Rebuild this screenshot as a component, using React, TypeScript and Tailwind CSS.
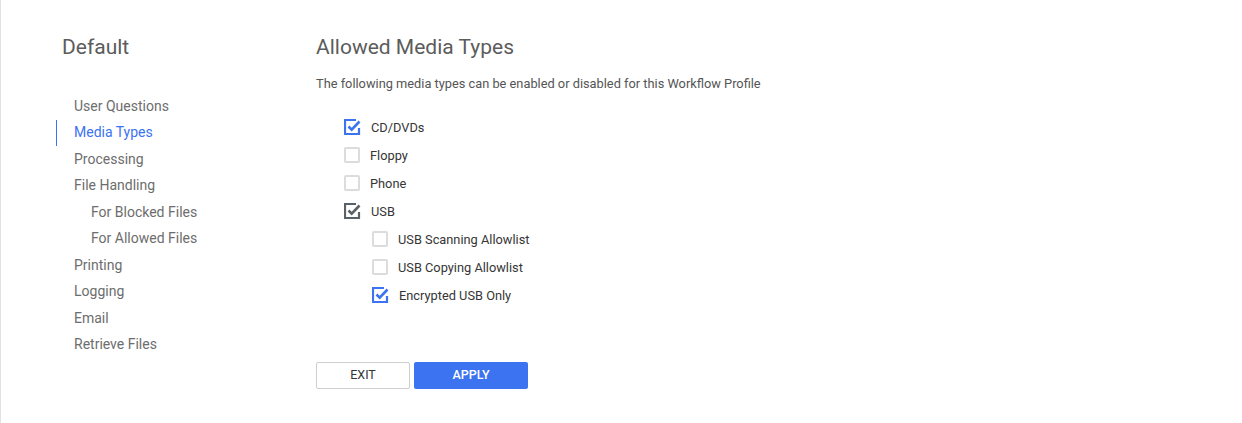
import React from "react";

type Item = { label: string; checked: boolean; dark?: boolean; nested?: boolean };

const navItems = [
    { label: "User Questions" },
    { label: "Media Types", active: true },
    { label: "Processing" },
    { label: "File Handling" },
    { label: "For Blocked Files", sub: true },
    { label: "For Allowed Files", sub: true },
    { label: "Printing" },
    { label: "Logging" },
    { label: "Email" },
    { label: "Retrieve Files" },
];

const media: Item[] = [
    { label: "CD/DVDs", checked: true },
    { label: "Floppy", checked: false },
    { label: "Phone", checked: false },
    { label: "USB", checked: true, dark: true },
    { label: "USB Scanning Allowlist", checked: false, nested: true },
    { label: "USB Copying Allowlist", checked: false, nested: true },
    { label: "Encrypted USB Only", checked: true, nested: true },
];

function CheckBox({ checked, dark }: { checked: boolean; dark?: boolean }) {
    if (!checked) {
        return <span className="block w-4 h-4 rounded-[2px] border-2 border-[#dcdcdc] bg-white" />;
    }
    const color = dark ? "#5a6166" : "#3b73f0";
    return (
        <svg width="17" height="16" viewBox="0 0 17 16" className="block">
            <path d="M12 1H1v14h14V9" fill="none" stroke={color} strokeWidth="2.2" />
            <path d="M4.5 7.5l3.2 3.2L15.5 2.5" fill="none" stroke={color} strokeWidth="2.6" />
        </svg>
    );
}

export default function App() {
    return (
        <div className="w-[1242px] h-[423px] bg-white border-l border-[#e2e2e2] flex font-['Roboto',sans-serif] text-[#555]">
            <aside className="w-[254px] pl-[55px] pt-[34px]">
                <h2 className="pl-[6px] text-[21px] leading-[26px] text-[#5c5c5c]">Default</h2>
                <nav className="mt-[33px] flex flex-col">
                    {navItems.map((n) => (
                        <div
                            key={n.label}
                            className={
                                "h-[26.5px] flex items-center text-[14px] border-l " +
                                (n.active ? "border-[#3b73f0] text-[#3b73f0]" : "border-transparent text-[#6d6d6d]") +
                                (n.sub ? " pl-[34px]" : " pl-[17px]")
                            }
                        >
                            {n.label}
                        </div>
                    ))}
                </nav>
            </aside>
            <main className="pl-[61px] pt-[34px] flex-1">
                <h1 className="text-[21px] leading-[26px] text-[#5c5c5c]">Allowed Media Types</h1>
                <p className="mt-[14px] text-[12.8px] text-[#555]">The following media types can be enabled or disabled for this Workflow Profile</p>
                <div className="mt-[20px] flex flex-col">
                    {media.map((m) => (
                        <label
                            key={m.label}
                            className={"h-[28px] flex items-center gap-[10px] text-[12.8px] text-[#363636] " + (m.nested ? "pl-[56px]" : "pl-[28px]")}
                        >
                            <CheckBox checked={m.checked} dark={m.dark} />
                            <span>{m.label}</span>
                        </label>
                    ))}
                </div>
                <div className="mt-[53px] flex gap-[4px]">
                    <button className="w-[94px] h-[27px] border border-[#cfcfcf] rounded-[2px] text-[12.5px] text-[#333] bg-white">EXIT</button>
                    <button className="w-[114px] h-[27px] rounded-[2px] text-[12.5px] font-medium text-white bg-[#3b73f0]">APPLY</button>
                </div>
            </main>
        </div>
    );
}
